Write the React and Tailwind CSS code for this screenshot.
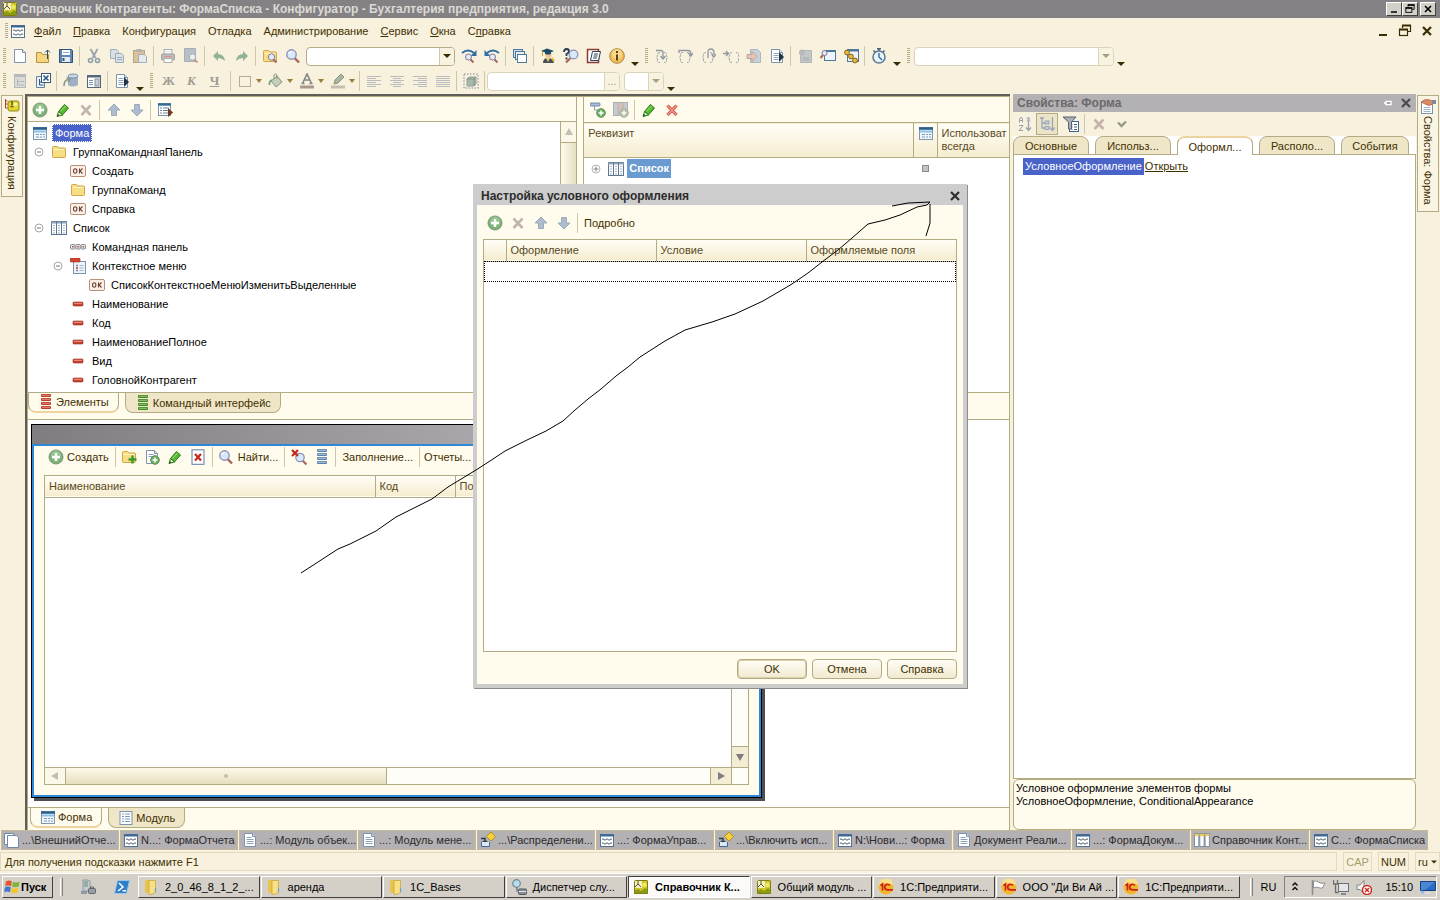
import clsx from 'clsx';

// All icons live on a 16x16 grid
const page = (
  <>
    <path d="M2.500 1.500h8l3 3v10h-11z" fill="#fff" stroke="#7d93ad" />
    <path d="M10.500 1.500v3h3" fill="#dce6f0" stroke="#7d93ad" />
  </>
);
const lens = (
  <>
    <path d="M9.500 10l4.500 4.500" stroke="#a8665a" strokeWidth="2.400" />
    <circle cx="6.500" cy="6.500" r="4.700" fill="#d9e8fb" stroke="#8b93b5" strokeWidth="1.400" />
    <path d="M4 6a3 3 0 012.500-2.500" stroke="#fff" fill="none" />
  </>
);
const smallLens = (
  <>
    <path d="M11.500 11.500l3 3" stroke="#a8665a" strokeWidth="2" />
    <circle cx="9.500" cy="9" r="3.200" fill="#e3edfa" stroke="#84779b" />
  </>
);
const folder = (
  <>
    <path d="M1.500 3.500q0-1 1-1h4l1.500 1.500h5.500q1 0 1 1v7.500q0 1-1 1h-11q-1 0-1-1z" fill="#f7dd84" stroke="#cfa545" />
    <path d="M2.500 5.500h11" stroke="#fdf3c4" />
  </>
);
const greenPlus = (
  <>
    <circle cx="8" cy="8" r="7" fill="#7ab374" stroke="#7f9482" />
    <circle cx="8" cy="6.500" r="5" fill="#a5cf9c" opacity=".6" />
    <path d="M8 4v8M4 8h8" stroke="#fff" strokeWidth="2.400" />
  </>
);
const miniPlus = (
  <>
    <circle cx="11" cy="11" r="4.300" fill="#6fae63" stroke="#5c8f57" />
    <path d="M11 8.500v5M8.500 11h5" stroke="#fff" strokeWidth="1.500" />
  </>
);
const gridForm = (
  <>
    <rect x="1.500" y="2.500" width="13" height="12" fill="#fff" stroke="#56718c" />
    <path d="M1 3.500h14" stroke="#3a6a94" strokeWidth="2" />
    <path d="M3 7.500q1-1.500 2 0t2 0 2 0 2 0 2 0M3 11.500q1-1.500 2 0t2 0 2 0 2 0 2 0" stroke="#4a5866" fill="none" />
  </>
);
const conf = (
  <>
    <rect x="1" y="1" width="14" height="14" rx="1" fill="#d3c62a" />
    <rect x="1" y="1" width="8" height="8" fill="#f3efc8" />
    <path d="M5 1v4l-3 3M5 5l3 3" stroke="#5c5a20" fill="none" />
    <circle cx="11.500" cy="6" r="2.300" fill="#efe95c" />
    <path d="M1 15v-3l4-2 3 2 4-3 3 2v4z" fill="#8a9d12" />
    <rect x="1.500" y="1.500" width="13" height="13" rx="1" fill="none" stroke="#827a17" />
  </>
);
const pageRun = (
  <>
    {page}
    <path d="M4.500 5.500h5M4.500 7.500h5M4.500 9.500h5M4.500 11.500h5" stroke="#8ea2b8" />
    <path d="M10 4l5 5-5 5z" fill="#1f3347" />
  </>
);
const braces = (
  <path d="M6 4.500q-2.500 0-2.500 2V8L2.500 9.500l1 1.500v2q0 1.500 2.500 1.500M10 4.500q2.500 0 2.500 2V8l1 1.500-1 1.500v2q0 1.500-2.500 1.500" fill="none" stroke="#a3a8ae" strokeDasharray="3 .7" />
);
const stack = (fill, light) => (
  <>
    {[1, 5, 9, 13].map((y) => (
      <g key={y}>
        <rect x="3" y={y - 1} width="10" height="3" rx="1" fill={fill} />
        <path d={`M4 ${y + 0.3}h8`} stroke={light} />
      </g>
    ))}
  </>
);
const lines = (rows) => (
  <>
    {rows.map(([a, b], i) => (
      <path key={i} d={`M${a} ${3.5 + i * 2}H${b}`} stroke="#b9bbbd" />
    ))}
  </>
);

const ICONS = {
  conf,
  page,
  lens,
  folder,
  greenPlus,
  gridForm,
  pageRun,
  open: (
    <>
      <path d="M1.500 4.500h5l1 2h6v8h-12z" fill="#f5d781" stroke="#b9903c" />
      <path d="M12.500 11V2M10 4.500L12.500 2 15 4.500" fill="none" stroke="#2f4d69" />
    </>
  ),
  save: (
    <>
      <path d="M1.500 1.500h12l1 1v12h-13z" fill="#5c88b3" stroke="#2f5377" />
      <rect x="4" y="2" width="8" height="5" fill="#fff" />
      <rect x="4" y="9" width="8" height="5" fill="#e6edf5" />
      <path d="M5.500 10v3" stroke="#2f5377" strokeWidth="2" />
      <path d="M5 4.500h6" stroke="#9ab" />
    </>
  ),
  cut: (
    <>
      <path d="M4.500 1l5 9M11.500 1l-5 9" stroke="#5a7089" strokeWidth="1.800" />
      <circle cx="4.500" cy="12.500" r="2" fill="none" stroke="#4a6788" strokeWidth="1.600" />
      <circle cx="11.500" cy="12.500" r="2" fill="none" stroke="#4a6788" strokeWidth="1.600" />
    </>
  ),
  copy: (
    <>
      <path d="M1.500 1.500h6l2 2v7h-8z" fill="#c6d6ea" stroke="#6482a5" />
      <path d="M6.500 5.500h6l2 2v7h-8z" fill="#c6d6ea" stroke="#6482a5" />
      <path d="M8 9.500h5M8 11.500h5" stroke="#6482a5" />
    </>
  ),
  paste: (
    <>
      <rect x="1.500" y="2.500" width="11" height="12" fill="#c9a46e" stroke="#8a7350" />
      <rect x="4.500" y="1" width="5" height="3" fill="#7d8998" />
      <path d="M6.500 6.500h6l2 2v6h-8z" fill="#dbe6f3" stroke="#6482a5" />
    </>
  ),
  print: (
    <>
      <rect x="4" y="1.500" width="8" height="5" fill="#eef2f8" stroke="#75859b" />
      <rect x="1.500" y="6" width="13" height="6" rx="1" fill="#9b9aa6" stroke="#67707f" />
      <rect x="4" y="10.500" width="8" height="4" fill="#fff" stroke="#75859b" />
      <path d="M4 8.500h8" stroke="#c3564a" />
    </>
  ),
  preview: (
    <>
      <path d="M1.500 .500h11v13h-11z" fill="#8fa0b8" stroke="#71849e" />
      {smallLens}
    </>
  ),
  undo: <path d="M7 3v3q6 0 7 7-3-3-7-3v3L2 8z" fill="#53876a" />,
  redo: <path d="M9 3v3q-6 0-7 7 3-3 7-3v3l5-5z" fill="#53876a" />,
  findFolder: (
    <>
      {folder}
      {smallLens}
    </>
  ),
  findNext: (
    <>
      <path d="M1 5q6-5 12 0" fill="none" stroke="#2f6ea3" strokeWidth="1.800" />
      <path d="M15.500 2v6h-6z" fill="#2f6ea3" />
      <path d="M9.500 11.500l3 3" stroke="#a8665a" strokeWidth="2" />
      <circle cx="7.500" cy="9" r="3" fill="#e3edfa" stroke="#84779b" />
    </>
  ),
  findPrev: (
    <>
      <path d="M3 5q6-5 12 0" fill="none" stroke="#2f6ea3" strokeWidth="1.800" />
      <path d="M.500 2v6h6z" fill="#2f6ea3" />
      <path d="M10.500 11.500l3 3" stroke="#a8665a" strokeWidth="2" />
      <circle cx="8.500" cy="9" r="3" fill="#e3edfa" stroke="#84779b" />
    </>
  ),
  windows: (
    <>
      <rect x="1.500" y="1.500" width="9" height="8" fill="#cfe0ee" stroke="#4d7898" />
      <rect x="3.500" y="3.500" width="9" height="8" fill="#e4eef6" stroke="#4d7898" />
      <rect x="5.500" y="6.500" width="9" height="8" fill="#fff" stroke="#4d7898" />
    </>
  ),
  student: (
    <>
      <path d="M3 15q0-5 5-5t6 5z" fill="#46515b" />
      <path d="M6 10l2 4 2-4z" fill="#f3d66a" />
      <circle cx="8.500" cy="7" r="3" fill="#f0c38f" />
      <path d="M1 3l6-2.500L14 3 8 5.500z" fill="#1d4b63" />
      <path d="M5 4v2q3 1 6 0V4" fill="#1d4b63" />
      <path d="M2.500 4v4" stroke="#d89c2a" />
      <path d="M12 10l2 3" stroke="#f0b429" strokeWidth="2" />
    </>
  ),
  helpLens: (
    <>
      <path d="M1 4q0-3 2.500-3T6 3.500Q6 5 3.500 6v2M3.500 9.500v2" stroke="#243b52" strokeWidth="1.800" fill="none" />
      <path d="M7.500 10L3 14.500" stroke="#a8665a" strokeWidth="2.200" />
      <circle cx="10.500" cy="6.500" r="4.300" fill="#d9e8fb" stroke="#8b93b5" strokeWidth="1.300" />
    </>
  ),
  book: (
    <>
      <rect x="1.500" y="1.500" width="11" height="13" fill="#fff" stroke="#8c3a33" strokeWidth="1.500" />
      <path d="M6.500 3.500h8l-2 9h-8z" fill="#fff" stroke="#2c3e57" />
      <path d="M8 6h4M7.500 8h4M7 10h4" stroke="#2c3e57" />
    </>
  ),
  info: (
    <>
      <circle cx="8" cy="8" r="7.300" fill="#f3c25c" stroke="#a98339" />
      <circle cx="8" cy="6" r="5" fill="#f9e0a0" opacity=".7" />
      <path d="M8 3v2M8 6.500v6" stroke="#5a420e" strokeWidth="2" />
    </>
  ),
  stepInto: (
    <>
      {braces}
      <path d="M2 2.500h5q2 0 2 2v5M6.500 8L9 11l2.500-3" fill="none" stroke="#8f97a1" strokeWidth="1.300" />
    </>
  ),
  stepOver: (
    <>
      {braces}
      <path d="M2 5V2.500h9q3 0 3 4M11.500 5L14 8l2-3" fill="none" stroke="#8f97a1" strokeWidth="1.300" />
    </>
  ),
  stepOut: (
    <>
      {braces}
      <path d="M8 10V4q0-3 3-3t3 4v2M11.500 6L14 9l2-3" fill="none" stroke="#8f97a1" strokeWidth="1.300" />
    </>
  ),
  runTo: (
    <>
      <g transform="translate(3 0)">{braces}</g>
      <path d="M0 5.500h5M3 3l2.500 2.500L3 8" fill="none" stroke="#8f97a1" strokeWidth="1.300" />
    </>
  ),
  goPage: (
    <>
      <path d="M4.500 1.500h7l3 3v10h-10z" fill="#a9bdd6" stroke="#7890ad" />
      <path d="M1 6.500h5V3.500l5 5-5 5v-3H1z" fill="#d9a6a0" stroke="#9c6f6c" />
    </>
  ),
  evalPage: (
    <>
      <path d="M3.500 2.500h11v12h-11z" fill="#a3adbb" stroke="#8490a0" />
      <circle cx="5" cy="4.500" r="3" fill="#8d97a6" />
      <path d="M5.500 10h7M5.500 12h7" stroke="#77808c" />
    </>
  ),
  watch: (
    <>
      <rect x="4.500" y="2.500" width="11" height="10" fill="#eef4fa" stroke="#4d7898" />
      <path d="M4 3h12" stroke="#4d7898" strokeWidth="2" />
      <circle cx="4.500" cy="5" r="2.500" fill="#e3edfa" stroke="#84779b" />
      <path d="M3 7l-2.500 3" stroke="#a8665a" strokeWidth="2" />
    </>
  ),
  chain: (
    <>
      <rect x="4.500" y="1.500" width="11" height="12" fill="#eef4fa" stroke="#4d7898" />
      <path d="M4 2.500h12" stroke="#4d7898" strokeWidth="2" />
      <circle cx="4" cy="4.500" r="2.400" fill="#f0b93a" stroke="#80631b" />
      <circle cx="8" cy="8.500" r="2.400" fill="#f0b93a" stroke="#80631b" />
      <circle cx="12" cy="12.500" r="2.400" fill="#f0b93a" stroke="#80631b" />
    </>
  ),
  timer: (
    <>
      <path d="M8 0v3M6 .800h4M2.500 2.500l2 2M13.500 2.500l-2 2" stroke="#4a5f75" strokeWidth="1.500" />
      <circle cx="8" cy="9" r="6" fill="#eaf3fb" stroke="#5d7893" strokeWidth="1.500" />
      <path d="M8 5v4l3 3" fill="none" stroke="#2e6da0" strokeWidth="1.400" />
    </>
  ),
  treeGray: (
    <>
      <rect x="2.500" y="1.500" width="11" height="13" fill="#c9ced6" stroke="#8b95a3" />
      <path d="M2.500 3h11" stroke="#8b95a3" strokeWidth="2" />
      <path d="M5.500 6v6h3M5.500 8.500h3M9 8.500h3M9 12h3" stroke="#7e8896" fill="none" />
    </>
  ),
  treeX: (
    <>
      <path d="M1.500 3.500h8v11h-8z" fill="#eaf1f8" stroke="#6482a5" />
      <path d="M4.500 6v6h4M4.500 9h4" stroke="#38597a" fill="none" />
      <rect x="6.500" y=".500" width="9" height="9" fill="#fff" stroke="#38597a" />
      <path d="M8.500 2.500l5 5M13.500 2.500l-5 5" stroke="#2b5b8a" strokeWidth="1.700" />
    </>
  ),
  db: (
    <>
      <path d="M5 3v9q4.500 3 10 0V3z" fill="#9db0c4" />
      <ellipse cx="10" cy="3" rx="5" ry="2" fill="#c9d6e3" stroke="#8095ab" />
      <path d="M1 13q0-6 5-7M3.500 4.500L7 6 5 9" fill="none" stroke="#8a988f" strokeWidth="1.600" />
    </>
  ),
  pane: (
    <>
      <rect x="1.500" y="2.500" width="13" height="12" fill="#fff" stroke="#54687d" />
      <path d="M1 3.500h14" stroke="#54687d" strokeWidth="2" />
      <path d="M3 7.500h4M3 9.500h4M3 11.500h4" stroke="#7d93ad" />
      <rect x="9" y="6" width="4" height="7" fill="#c9ced6" stroke="#8b8f96" />
    </>
  ),
  box: <rect x="2.500" y="3.500" width="11" height="10" fill="none" stroke="#b4ad90" />,
  bucket: (
    <>
      <path d="M3 8l6-5 5 6-6 5z" fill="#c3cfba" stroke="#87937d" />
      <path d="M6 6V2q2-2 3 0v4" fill="none" stroke="#87937d" />
      <path d="M4 7q-3 1-2.500 5" stroke="#7aa383" strokeWidth="1.800" fill="none" />
    </>
  ),
  fontColor: (
    <>
      <path d="M3.500 10.500L8 1l4.500 9.500M5 7h6M2.500 10.500h3M10.500 10.500h3" stroke="#85868a" strokeWidth="1.600" fill="none" />
      <rect x="1" y="12.500" width="14" height="3" fill="#a79a8b" />
    </>
  ),
  penColor: (
    <>
      <path d="M4 11l1-4 6-6 3 3-6 6z" fill="#a9b79f" stroke="#87937d" />
      <rect x="1" y="12.500" width="14" height="3" fill="#c5bfae" />
    </>
  ),
  alignL: lines([[1, 15], [1, 10], [1, 15], [1, 10], [1, 15], [1, 10]]),
  alignC: lines([[1, 15], [4, 12], [1, 15], [4, 12], [1, 15], [4, 12]]),
  alignR: lines([[1, 15], [6, 15], [1, 15], [6, 15], [1, 15], [6, 15]]),
  alignJ: lines([[1, 15], [1, 15], [1, 15], [1, 15], [1, 15], [1, 15]]),
  cube: (
    <>
      <rect x="1" y="1" width="14" height="14" fill="none" stroke="#a9abad" strokeWidth="1.500" strokeDasharray="1.500 1.500" />
      <path d="M4 6l2-2h7v7l-2 2H4z" fill="#a9b9ab" stroke="#93a196" />
      <path d="M4 6h7v7M11 6l2-2" fill="none" stroke="#82928a" />
    </>
  ),
  pencil: (
    <>
      <path d="M3.500 9.500l6-7 4 3.500-6 7z" fill="#57b832" stroke="#2b7a1b" />
      <path d="M2 14.500l1.500-5 4 3.500z" fill="#dff0c8" stroke="#2b7a1b" />
      <path d="M2 14.500l1-2.500 1.500 1.500z" fill="#234b16" />
      <path d="M5.500 9.500l5-5.500" stroke="#a4e07c" />
    </>
  ),
  crossGray: <path d="M3.500 3.500l9 9.500M12.500 3.500l-9 9.500" stroke="#c4b4ae" strokeWidth="2.600" />,
  crossRed: (
    <>
      <path d="M3.500 3.500l9 9.500M12.500 3.500l-9 9.500" stroke="#cf5144" strokeWidth="3.200" />
      <path d="M3.500 3.500l9 9.500M12.500 3.500l-9 9.500" stroke="#f09a8a" strokeWidth="1.200" />
    </>
  ),
  up: <path d="M8 2l6 6h-3.500v5.500h-5V8H2z" fill="#afbccd" stroke="#9baabd" />,
  down: <path d="M8 14l6-6h-3.500V2.500h-5V8H2z" fill="#afbccd" stroke="#9baabd" />,
  formRun: (
    <>
      <rect x="1.500" y="1.500" width="12" height="12" fill="#fff" stroke="#7d93ad" />
      <path d="M1 2.500h13" stroke="#2f6c97" strokeWidth="2.400" />
      <path d="M3 6h2M6 6h6M3 8.500h2M6 8.500h6M3 11h2M6 11h6" stroke="#6a819a" />
      <path d="M11 6l5 4.500-5 4.500z" fill="#6f3822" />
    </>
  ),
  form: (
    <>
      <rect x="1.500" y="2.500" width="13" height="12" fill="#eef5fc" stroke="#8396ab" />
      <path d="M1 3.500h14" stroke="#2d618c" strokeWidth="2.600" />
      <path d="M2 6.500h12" stroke="#8cc0e6" strokeWidth="2" />
      <path d="M4 9.500h3M8 9.500h2M11 9.500h2M4 12h3M8 12h2M11 12h2" stroke="#7d9dbb" />
    </>
  ),
  ok: (
    <>
      <rect x=".500" y="2.500" width="15" height="11" rx="1.500" fill="#fcf0e6" stroke="#b98d78" />
      <ellipse cx="5.200" cy="8" rx="1.700" ry="2.200" fill="none" stroke="#6b4034" strokeWidth="1.100" />
      <path d="M9.500 5.500v5M12.500 5.500L10 8l2.500 2.500" fill="none" stroke="#6b4034" strokeWidth="1.100" />
    </>
  ),
  table: (
    <>
      <rect x=".500" y="1.500" width="15" height="13" fill="#fff" stroke="#5c7590" />
      <path d="M0 2.500h16" stroke="#8fa3b8" strokeWidth="2" />
      <path d="M5.500 1v14M10.500 1v14" stroke="#5c7590" />
      <path d="M2 5.500h2M2 8h2M2 10.500h2M7 5.500h2M7 8h2M7 10.500h2M12 5.500h2M12 8h2M12 10.500h2M2 13h2M7 13h2M12 13h2" stroke="#9fb1c4" />
    </>
  ),
  cmdbar: (
    <>
      {[0, 5.3, 10.6].map((x) => (
        <g key={x}>
          <rect x={x + 0.5} y="5.500" width="4.400" height="4.500" rx=".8" fill="#e9eaec" stroke="#85888c" />
          <rect x={x + 2} y="7" width="1.500" height="1.500" fill="#a0564a" />
        </g>
      ))}
    </>
  ),
  ctxmenu: (
    <>
      <rect x="3.500" y="3.500" width="12" height="12" fill="#eef3f9" stroke="#7c92aa" />
      <rect x="0" y="0" width="10" height="4" rx="1" fill="#d6432f" stroke="#98301f" strokeWidth=".6" />
      <path d="M6 7.500h2M6 12.500h2" stroke="#7b8fa5" strokeWidth="1.500" />
      <path d="M6 10h2" stroke="#c33" strokeWidth="1.500" />
      <path d="M9.500 7.500h4M9.500 10h4M9.500 12.500h4" stroke="#a5b6c8" />
    </>
  ),
  dash: (
    <>
      <rect x="3" y="6" width="10" height="4" rx="1" fill="#c9422f" stroke="#8f2b1d" strokeWidth=".6" />
      <path d="M4 7.300h8" stroke="#ee9886" />
    </>
  ),
  stackRed: stack('#b5402e', '#ef8672'),
  stackGreen: stack('#42882a', '#94cf6c'),
  stackBlue: stack('#5f82ad', '#b3c8df'),
  module: (
    <>
      <rect x="2" y="1.500" width="12" height="13" fill="#fbfdff" stroke="#7d93ad" />
      <path d="M4 4h2M7 4h5M4 6.500h2M7 6.500h5M4 9h2M7 9h5M4 11.500h2M7 11.500h5" stroke="#7f9ab7" />
    </>
  ),
  text: (
    <>
      {page}
      <path d="M4.500 5.500h5M4.500 7.500h7M4.500 9.500h7M4.500 11.500h7" stroke="#8ea2b8" />
    </>
  ),
  pages: (
    <>
      <path d="M.500 1.500h9v11h-9z" fill="#fff" stroke="#6f8aa8" />
      <path d="M3.500 3.500h9l2 2v10h-11z" fill="#fff" stroke="#6f8aa8" />
    </>
  ),
  attrAdd: (
    <>
      <rect x="0" y="1" width="10" height="3" rx="1" fill="#a9bfd9" stroke="#5a7699" strokeWidth=".8" />
      <path d="M4.500 4v4h4" fill="none" stroke="#8ba0b6" />
      {miniPlus}
    </>
  ),
  colAdd: (
    <>
      <rect x=".500" y=".500" width="14" height="13" fill="#a4acb8" stroke="#7a8390" />
      <path d="M5 1v12M10 1v12" stroke="#7a8390" />
      <path d="M6 1h3v12H6z" fill="#cf8f8a" />
      <circle cx="11" cy="11" r="4.300" fill="#7f9a7c" stroke="#75866f" />
      <path d="M11 8.500v5M8.500 11h5" stroke="#fff" strokeWidth="1.500" />
    </>
  ),
  folderPlus: (
    <>
      {folder}
      <path d="M11.500 6.500v8M7.500 10.500h8" stroke="#3c9a2b" strokeWidth="2.400" />
    </>
  ),
  docPlus: (
    <>
      {page}
      <path d="M4.500 5.500h5M4.500 7.500h5" stroke="#8ea2b8" />
      {miniPlus}
    </>
  ),
  docX: (
    <>
      <rect x="2" y=".800" width="12" height="14.500" fill="#fff" stroke="#5b7ea6" />
      <path d="M5 5l6 6.500M11 5l-6 6.500" stroke="#c4281c" strokeWidth="2.200" />
    </>
  ),
  lensX: (
    <>
      <path d="M11.500 11.500l4 4" stroke="#a8665a" strokeWidth="2.200" />
      <circle cx="9" cy="8.500" r="4.200" fill="#d9e8fb" stroke="#8b93b5" strokeWidth="1.300" />
      <path d="M1 1l6 6M7 1L1 7" stroke="#c4281c" strokeWidth="2.200" />
    </>
  ),
  sortAz: (
    <>
      <path d="M2.500 6.500V3l1.500-2 1.500 2v3.500M2.500 4.500h3M2 9.500h4l-4 5h4" fill="none" stroke="#9aa0a8" />
      <path d="M11.500 1v13M9 11.500l2.500 3 2.500-3" fill="none" stroke="#9aa5b3" strokeWidth="1.400" />
      <path d="M9.500 2l4 3M13.500 2l-4 3" stroke="#b3bac3" />
    </>
  ),
  sortTree: (
    <>
      <path d="M1 2h4M3 2v10h4M3 7h4" fill="none" stroke="#9aa5b3" strokeWidth="1.300" />
      <rect x="6" y="5" width="4" height="3" fill="#c4ccd6" stroke="#9aa5b3" />
      <rect x="6" y="10.500" width="4" height="3" fill="#c4ccd6" stroke="#9aa5b3" />
      <path d="M13.500 1v13M11 11.500l2.500 3 2.500-3" fill="none" stroke="#9aa5b3" strokeWidth="1.300" />
    </>
  ),
  funnel: (
    <>
      <rect x="6.500" y="5.500" width="9" height="10" fill="#fff" stroke="#3e618a" />
      <path d="M11 8.500h3M11 11h3M11 13.500h3M8.500 8.500h1M8.500 13.500h1" stroke="#3e618a" />
      <path d="M8.500 11h1" stroke="#c33" />
      <path d="M0 1h13L8.500 6v7h-3V6z" fill="#a9b0ba" stroke="#5b636e" />
    </>
  ),
  check: <path d="M4 6.500l3.500 3.500L12 5.500" fill="none" stroke="#8f9c86" strokeWidth="2.400" />,
  key: (
    <>
      <path d="M11 0l4.500 4.500L11 9 6.500 4.500z" fill="#f6d13c" stroke="#b88d1a" />
      <path d="M1 6.500h4v4M3 9l2 2.500L7 9" fill="none" stroke="#2b3c50" strokeWidth="1.500" />
      <path d="M1.500 10v4.500h8V10" fill="#dfe8f1" stroke="#3f6a95" />
    </>
  ),
  catalog: (
    <>
      {[0, 5.3, 10.6].map((x) => (
        <g key={x}>
          <rect x={x + 0.5} y="1.500" width="4.300" height="13" fill="#fff" stroke="#7f90a3" />
          <path d={`M${x + 0.5} 3h4.3`} stroke="#e7cf5f" strokeWidth="2.400" />
        </g>
      ))}
    </>
  ),
  hand: (
    <>
      <rect x="1.500" y="4.500" width="11" height="11" fill="#fff" stroke="#7d93ad" />
      <path d="M3.500 9.500h7M3.500 11.500h7M3.500 13.500h7" stroke="#9db4cc" />
      <path d="M1 4q4-4 9-2l3 1v3q-4 3-8 0z" fill="#d98a63" stroke="#9c5b3c" strokeWidth=".6" />
      <rect x="12" y="2" width="4" height="4" fill="#7b8b9c" />
    </>
  ),
  confTree: (
    <>
      <path d="M1.500 1v9h2M1.500 3h2M1.500 6h2" fill="none" stroke="#c0392b" />
      <rect x="4" y="3" width="11" height="10" rx="2" fill="#e2d52f" stroke="#8f861c" />
      <path d="M8 3v4M6.500 8.500h3" stroke="#5c5a20" strokeWidth="1.500" />
      <circle cx="11.500" cy="6.500" r="2" fill="#f8f394" />
    </>
  ),
  server: (
    <>
      <path d="M3 1h5l2 1v10H3z" fill="#c4ccd4" stroke="#7f8a95" strokeWidth=".8" />
      <path d="M4 3h4M4 5h4M4 7h4" stroke="#6b8a6e" />
      <rect x="1" y="12" width="6" height="3" fill="#8f9aa6" />
      <rect x="8.500" y="9.500" width="7" height="5" rx="1" fill="#9a9ea3" stroke="#5e656c" />
      <path d="M10.500 9.500V8h3v1.500" fill="none" stroke="#5e656c" />
    </>
  ),
  shell: (
    <>
      <path d="M3.500 1.500h12l-3 13h-12z" fill="#2f7fc6" stroke="#9cc5e8" />
      <path d="M5 4l4 4-5 4M8.500 11.800h3.500" fill="none" stroke="#fff" strokeWidth="1.500" />
    </>
  ),
  winFlag: (
    <>
      <path d="M2 2.500Q5 .500 7.800 2.500L7 7.300Q4 5.500 1.200 7.300z" fill="#e4572e" />
      <path d="M8.800 2.800Q12 4.500 15.500 2.500l-.8 5Q11 9 8 7.500z" fill="#7fb53a" />
      <path d="M1 8.300Q4 6.500 6.800 8.300L6 13.300Q3 11.500.2 13.300z" fill="#3f78cc" />
      <path d="M7.800 8.600Q11 10.200 14.500 8.500l-.8 5Q10 15 7 13.500z" fill="#f4c430" />
    </>
  ),
  folderWin: (
    <>
      <path d="M2 1.500l6-1v14l-6-1z" fill="#e8c34d" />
      <path d="M6 1.500h6.500v12L8 15.500H6z" fill="#f7e184" stroke="#c79f35" strokeWidth=".7" />
      <path d="M12.500 9v4" stroke="#6f9ec9" strokeWidth="1.200" />
    </>
  ),
  manager: (
    <>
      <circle cx="5.500" cy="4.500" r="3.800" fill="#b9dcea" stroke="#6f8795" strokeWidth="1.200" />
      <path d="M6 8v4h4" fill="none" stroke="#6f8795" strokeWidth="1.600" />
      <rect x="7.500" y="10" width="8" height="5.500" rx="1" fill="#8b9197" stroke="#4e565e" />
      <path d="M7.500 12.500h8" stroke="#ddd" />
    </>
  ),
  oneC: (
    <>
      <circle cx="8" cy="8" r="7.500" fill="#f3b72d" />
      <path d="M1 6a7 7 0 0114 0q-7-3-14 0z" fill="#fbe08a" />
      <path d="M2.500 6.500L4.500 5v6.500M12 6.500q-1-1.500-3-1.200-2.500.500-2.300 3 .300 2.500 3 2.500H15" fill="none" stroke="#d0201a" strokeWidth="1.700" />
    </>
  ),
  chevrons: <path d="M5.500 6.500L8 4l2.500 2.500M5.500 11L8 8.500l2.500 2.500" fill="none" stroke="#111" strokeWidth="1.500" />,
  flag: (
    <>
      <path d="M2.500 1v15" stroke="#8b8d90" strokeWidth="1.600" />
      <path d="M3.500 2.500q3-1.500 5 .5t6.500 1l-2.500 5q-2.500.500-4-.500t-5 .5z" fill="#fff" stroke="#8b8d90" />
    </>
  ),
  monitor: (
    <>
      <rect x="5.500" y="4.500" width="10" height="8" fill="#e3e5e7" stroke="#6b6f73" />
      <path d="M8 15h5" stroke="#6b6f73" strokeWidth="1.500" />
      <path d="M.500 1v4h4V1M2.500 5v8.500h3" fill="none" stroke="#6b6f73" strokeWidth="1.300" />
    </>
  ),
  mute: (
    <>
      <path d="M1 6h3l4-4.500v13L4 10.500H1z" fill="#f2f2f2" stroke="#85878a" />
      <circle cx="11" cy="11" r="4.500" fill="#fff" stroke="#cb2a22" strokeWidth="1.500" />
      <path d="M9 9l4 4M13 9l-4 4" stroke="#cb2a22" strokeWidth="1.500" />
    </>
  ),
  desktop: (
    <>
      <path d="M.500 2.500h15v9h-15z" fill="#2a6bc4" stroke="#17407c" />
      <path d="M1 3h14L5 11H1z" fill="#5f9be2" opacity=".6" />
      <path d="M5 14h6" stroke="#d9dde2" strokeWidth="2" />
      <circle cx="2.500" cy="13" r="1.500" fill="#7db8ef" />
    </>
  ),
  minus: (
    <>
      <circle cx="8" cy="8" r="4" fill="#fff" stroke="#a5a5a5" />
      <path d="M6 8h4" stroke="#777" />
    </>
  ),
  plus: (
    <>
      <circle cx="8" cy="8" r="4" fill="#fff" stroke="#b5b5b5" />
      <path d="M5.500 8h5M8 5.500v5" stroke="#777" strokeWidth=".9" />
    </>
  ),
  close: <path d="M4 4l8 8M12 4l-8 8" stroke="currentColor" strokeWidth="2.200" />,
  minimize: <path d="M4 12h8" stroke="currentColor" strokeWidth="2" />,
  restore: (
    <>
      <path d="M5.500 5V2.500h8v6H11" fill="none" stroke="currentColor" strokeWidth="1.200" />
      <path d="M5 2.500h9M2 6.500h9" stroke="currentColor" strokeWidth="2" />
      <rect x="2.500" y="6.500" width="8" height="6" fill="none" stroke="currentColor" strokeWidth="1.200" />
    </>
  ),
  pin: <path d="M4 8h2M6 6.500h5v3H6z" stroke="#fff" strokeWidth="1.400" fill="#888" />,
  triDown: <path d="M4 6h8l-4 4z" fill="currentColor" />,
  triUp: <path d="M4 11h8L8 4z" fill="currentColor" />,
  triLeft: <path d="M11 4v8L4 8z" fill="currentColor" />,
  triRight: <path d="M5 4v8l7-4z" fill="currentColor" />,
};

function Icon({ name, className }) {
  return (
    <svg viewBox="0 0 16 16" width="16" height="16" className={clsx('shrink-0', className)} aria-hidden="true">
      {ICONS[name]}
    </svg>
  );
}

const Tool = ({ icon, off }) => (
  <button aria-label={icon} className={clsx('flex h-5 w-[23px] shrink-0 items-center justify-center', off && 'opacity-60')}>
    <Icon name={icon} />
  </button>
);

const Sep = () => (
  <div className="flex h-5 w-[5px] shrink-0 justify-center">
    <div className="w-px bg-[#cfc8a8]" />
  </div>
);

const Grip = () => (
  <div className="flex h-4 w-2 shrink-0 justify-center">
    <div className="w-[3px] bg-[repeating-linear-gradient(#b5ad84_0_1px,transparent_1px_2px)]" />
  </div>
);

// small "more buttons" arrow at the end of each toolbar
const More = () => (
  <button aria-label="more" className="flex h-5 w-[14px] shrink-0 items-end justify-center text-[#3a2c00]">
    <svg viewBox="0 0 8 4" width="8" height="4"><path d="M0 0h8L4 4z" fill="currentColor" /></svg>
  </button>
);

const ColorDrop = ({ icon }) => (
  <div className="flex w-[31px] shrink-0 items-center">
    <Tool icon={icon} />
    <svg viewBox="0 0 6 4" width="6" height="4"><path d="M0 0h6L3 4z" fill="#9a7d3a" /></svg>
  </div>
);

// 's' separator, 'g' grip, 'm' overflow arrow, leading '-' means disabled
const Tools = ({ list }) =>
  list.map((t, i) => {
    if (t === 's') return <Sep key={i} />;
    if (t === 'g') return <Grip key={i} />;
    if (t === 'm') return <More key={i} />;
    return t[0] === '-' ? <Tool key={i} icon={t.slice(1)} off /> : <Tool key={i} icon={t} />;
  });

const Combo = ({ label, className, off, dots }) => (
  <div className={clsx('flex h-[19px] shrink-0 overflow-hidden rounded border bg-white', off ? 'border-[#dad4bb]' : 'border-[#b3ab84]', className)}>
    <input aria-label={label} className="min-w-0 flex-1 bg-transparent px-1 outline-none" />
    <button
      aria-label={`${label} list`}
      className={clsx('flex w-[15px] items-center justify-center border-l bg-[#f8f3df]', off ? 'border-[#dad4bb] text-[#a59e86]' : 'border-[#cfc8a8] text-[#3a2c00]')}
    >
      {dots ? <span>...</span> : <Icon name="triDown" />}
    </button>
  </div>
);

const MENU = ['Файл', 'Правка', 'Конфигурация', 'Отладка', 'Администрирование', 'Сервис', 'Окна', 'Справка'];
const HOT = { Файл: 0, Правка: 0, Конфигурация: -1, Отладка: -1, Администрирование: -1, Сервис: 0, Окна: 0, Справка: 1 };

const TREE = [
  { level: 1, icon: 'folder', text: 'ГруппаКоманднаяПанель', open: true },
  { level: 2, icon: 'ok', text: 'Создать' },
  { level: 2, icon: 'folder', text: 'ГруппаКоманд' },
  { level: 2, icon: 'ok', text: 'Справка' },
  { level: 1, icon: 'table', text: 'Список', open: true },
  { level: 2, icon: 'cmdbar', text: 'Командная панель' },
  { level: 2, icon: 'ctxmenu', text: 'Контекстное меню', open: true },
  { level: 3, icon: 'ok', text: 'СписокКонтекстноеМенюИзменитьВыделенные' },
  { level: 2, icon: 'dash', text: 'Наименование' },
  { level: 2, icon: 'dash', text: 'Код' },
  { level: 2, icon: 'dash', text: 'НаименованиеПолное' },
  { level: 2, icon: 'dash', text: 'Вид' },
  { level: 2, icon: 'dash', text: 'ГоловнойКонтрагент' },
];
const INDENT = { 1: 'pl-0.5', 2: 'pl-[21px]', 3: 'pl-10' };

const WINDOWS = [
  ['pages', '...\\ВнешнийОтче...'],
  ['gridForm', 'N...: ФормаОтчета'],
  ['text', '...: Модуль объек...'],
  ['text', '...: Модуль мене...'],
  ['key', '...\\Распределени...'],
  ['gridForm', '...: ФормаУправ...'],
  ['key', '...\\Включить исп...'],
  ['gridForm', 'N:\\Нови...: Форма'],
  ['text', 'Документ Реали...'],
  ['gridForm', '...: ФормаДокум...'],
  ['catalog', 'Справочник Конт...'],
  ['gridForm', 'С...: ФормаСписка'],
];

const TASKS = [
  ['folderWin', '2_0_46_8_1_2_...'],
  ['folderWin', 'аренда'],
  ['folderWin', '1C_Bases'],
  ['manager', 'Диспетчер слу...'],
  ['conf', 'Справочник К...', true],
  ['conf', 'Общий модуль ...'],
  ['oneC', '1С:Предприяти...'],
  ['oneC', 'ООО "Ди Ви Ай ...'],
  ['oneC', '1С:Предприяти...'],
];

function TitleBar() {
  const btn = 'flex h-[14px] w-4 items-center justify-center border border-t-white border-l-white border-r-[#404040] border-b-[#404040] bg-[#d4d0c8] text-black';
  return (
    <header className="flex h-[18px] items-center bg-[#848184] pl-0.5 pr-1">
      <Icon name="conf" />
      <h1 className="ml-0.5 flex-1 text-[12px] font-bold text-[#dcd9d4]">
        Справочник Контрагенты: ФормаСписка - Конфигуратор - Бухгалтерия предприятия, редакция 3.0
      </h1>
      <button aria-label="minimize" className={btn}><Icon name="minimize" className="size-3" /></button>
      <button aria-label="restore" className={btn}><Icon name="restore" className="size-3" /></button>
      <button aria-label="close" className={clsx(btn, 'ml-0.5')}><Icon name="close" className="size-3" /></button>
    </header>
  );
}

function MenuBar() {
  return (
    <nav className="flex h-[26px] items-center pl-0.5">
      <Grip />
      <Icon name="gridForm" className="mr-2" />
      <div className="flex flex-1 gap-3">
        {MENU.map((m) => {
          const i = HOT[m];
          return (
            <button key={m} className="text-[#3f3000]">
              {i < 0 ? m : <>{m.slice(0, i)}<span className="underline">{m[i]}</span>{m.slice(i + 1)}</>}
            </button>
          );
        })}
      </div>
      <div className="flex gap-[6px] pr-[5px] text-[#3a2c00]">
        <button aria-label="minimize child"><Icon name="minimize" /></button>
        <button aria-label="restore child"><Icon name="restore" /></button>
        <button aria-label="close child"><Icon name="close" /></button>
      </div>
    </nav>
  );
}

function Toolbars() {
  const letter = 'h-5 w-[23px] shrink-0 font-["Liberation_Serif",serif] text-[13px] font-bold text-[#a09c94]';
  return (
    <>
      <div className="flex h-6 items-center">
        <Tools list={['g', 'page', 'open', 'save', 's', '-cut', '-copy', '-paste', 's', '-print', '-preview', 's', '-undo', '-redo', 's', 'findFolder', 'lens']} />
        <Combo label="search" className="mx-0.5 w-[149px]" />
        <Tools list={['findNext', 'findPrev', 's', 'windows', 's', 'student', 'helpLens', 'book', 'info', 'm', 'g', 'stepInto', 'stepOver', 'stepOut', 'runTo', '-goPage', 'pageRun', 's', '-evalPage', 'watch', 'chain', 's', 'timer', 'm', 'g']} />
        <Combo label="procedure" off className="ml-0.5 w-[200px]" />
        <More />
      </div>
      <div className="flex h-[26px] items-center">
        <Tools list={['g', '-treeGray', 'treeX', 's', 'db', 'pane', 's', 'pageRun', 'm', 'g']} />
        <div className="flex px-0.5">
          <button className={letter}>Ж</button>
          <button className={clsx(letter, 'italic')}>К</button>
          <button className={clsx(letter, 'underline')}>Ч</button>
        </div>
        <Sep />
        <ColorDrop icon="box" />
        <ColorDrop icon="bucket" />
        <ColorDrop icon="fontColor" />
        <ColorDrop icon="penColor" />
        <Tools list={['s', 'alignL', 'alignC', 'alignR', 'alignJ', 's', 'cube', 's']} />
        <Combo label="font" off dots className="w-[133px]" />
        <Combo label="font size" off className="ml-1 w-10" />
        <More />
      </div>
    </>
  );
}

const BottomTab = ({ icon, children, active }) => (
  <button
    className={clsx(
      'flex h-5 items-center gap-0.5 rounded-b-lg border border-t-0 border-[#b3ab84] px-[9px] text-[#3f3000]',
      active ? 'border-b-2 border-b-[#ecd3a0] bg-[#fffbed]' : 'bg-[#efe6c8]',
    )}
  >
    <Icon name={icon} />
    {children}
  </button>
);

function ElementsPane() {
  return (
    <section className="flex min-w-0 flex-[550] flex-col border-r border-[#b3ab84]">
      <div className="flex h-[25px] items-center border-b border-[#b3ab84] pt-px">
        <Tools list={['greenPlus', 'pencil', 'crossGray', 's', 'up', 'down', 's', 'formRun']} />
      </div>
      <div className="flex bg-white text-black">
        <ul className="flex-1 pb-[3px] pt-px">
          <li className="flex h-[19px] items-center pl-1">
            <Icon name="form" />
            <span className="ml-1 border border-dotted border-white bg-[#4a63c8] px-0.5 leading-4 text-white">Форма</span>
          </li>
          {TREE.map((n) => (
            <li key={n.text} className={clsx('flex h-[19px] items-center', INDENT[n.level])}>
              <span className="w-[21px] pl-px">{n.open && <Icon name="minus" />}</span>
              <Icon name={n.icon} />
              <span className="ml-1.5">{n.text}</span>
            </li>
          ))}
        </ul>
        <div className="flex w-4 flex-col border-l border-[#b3ab84] bg-gradient-to-r from-[#fffbed] to-[#e6dfbf]">
          <div className="flex h-[21px] items-center border-b border-[#b3ab84] bg-[#fbf8ea] text-[#c4bfae]">
            <Icon name="triUp" />
          </div>
        </div>
      </div>
      <div className="flex h-[27px] gap-1.5 border-t border-[#b3ab84]">
        <BottomTab icon="stackRed" active>Элементы</BottomTab>
        <BottomTab icon="stackGreen">Командный интерфейс</BottomTab>
      </div>
    </section>
  );
}

const TH = 'border-r border-[#b3ab84] px-1 text-left font-normal text-[#594a1c]';

function AttributesPane() {
  return (
    <section className="flex min-w-0 flex-[426] flex-col overflow-hidden border-l border-[#b3ab84]">
      <div className="flex h-[25px] shrink-0 items-center pl-0.5 pt-px">
        <Tools list={['attrAdd', '-colAdd', 's', 'pencil', 'crossRed']} />
      </div>
      <div className="flex-1 bg-white">
        <table className="w-full table-fixed border-collapse">
          <thead>
            <tr className="h-[35px] border-y border-[#b3ab84] bg-gradient-to-b from-[#fffdf6] to-[#f6edd0] align-top">
              <th className={clsx(TH, 'py-1 leading-[13px]')}>Реквизит</th>
              <th className={clsx(TH, 'w-6 py-0.5')}><Icon name="form" /></th>
              <th className="w-[72px] overflow-hidden whitespace-nowrap py-1 pl-1 text-left font-normal leading-[13px] text-[#594a1c]">Использоват<br />всегда</th>
            </tr>
          </thead>
          <tbody>
            <tr className="h-[22px]">
              <td>
                <div className="flex items-center pl-1">
                  <Icon name="plus" />
                  <Icon name="table" className="ml-1" />
                  <b className="ml-[3px] bg-[#6a9bd0] px-0.5 leading-[19px] text-white">Список</b>
                </div>
              </td>
              <td><div className="mx-auto size-[7px] border border-[#8a8a8a] bg-[#c4c4c4]" /></td>
              <td />
            </tr>
          </tbody>
        </table>
      </div>
      <div className="h-[27px] shrink-0 border-t border-[#b3ab84]" />
    </section>
  );
}

function FormPreview() {
  const text = 'shrink-0 text-[#3f3000]';
  return (
    <div className="flex w-[731px] flex-1 flex-col border border-black bg-[#fffbed] shadow-[3px_3px_0_0_#4c4e52]">
      <div className="h-[19px] shrink-0 bg-gradient-to-r from-[#7f7d80] to-[#c4c2c6]" />
      <div className="flex flex-1 flex-col border-2 border-[#2f87d8] px-[10px] pb-[10px]">
        <div className="flex h-[21px] items-center overflow-hidden">
          <Tools list={['greenPlus']} />
          <button className={text}>Создать</button>
          <div className="w-1" />
          <Tools list={['s', 'folderPlus', 'docPlus', 'pencil', 'docX', 's', 'lens']} />
          <button className={text}>Найти...</button>
          <div className="w-1" />
          <Tools list={['s', 'lensX', 'stackBlue', 's']} />
          <button className={clsx(text, 'mx-1')}>Заполнение...</button>
          <Sep />
          <button className={clsx(text, 'mx-0.5')}>Отчеты...</button>
        </div>
        <div className="mt-2 flex flex-1 flex-col border border-[#b3ab84] bg-white">
          <div className="flex flex-1">
            <div className="flex-1">
              <table className="w-full table-fixed border-collapse">
                <thead>
                  <tr className="h-[21px] border-b border-[#b3ab84] bg-gradient-to-b from-[#fffdf6] to-[#f6edd0]">
                    <th className={clsx(TH, 'w-[330px]')}>Наименование</th>
                    <th className={clsx(TH, 'w-20')}>Код</th>
                    <th className={TH}>По</th>
                  </tr>
                </thead>
              </table>
            </div>
            <div className="flex w-[17px] flex-col justify-end border-l border-[#b3ab84] bg-[#fffdf8]">
              <div className="flex h-[21px] items-center border-t border-[#b3ab84] bg-[#f3edd4] text-[#7d7d80]">
                <Icon name="triUp" className="rotate-180" />
              </div>
            </div>
          </div>
          <div className="flex h-[17px] border-t border-[#b3ab84] bg-[#fffdf8]">
            <div className="flex w-[21px] justify-center border-r border-[#b3ab84] bg-[#fbf8ea] text-[#c4bfae]"><Icon name="triLeft" /></div>
            <div className="flex w-[321px] items-center justify-center border-r border-[#b3ab84] bg-gradient-to-b from-[#fdf9e8] to-[#e6dfbf]">
              <div className="size-1 rounded-full bg-[#c4bfae]" />
            </div>
            <div className="flex-1" />
            <div className="flex w-[21px] justify-center border-l border-[#b3ab84] bg-[#f3edd4] text-[#7d7d80]"><Icon name="triRight" /></div>
            <div className="w-[17px] border-l border-[#b3ab84]" />
          </div>
        </div>
      </div>
    </div>
  );
}

function Properties() {
  const tabs = ['Основные', 'Использ...', 'Оформл...', 'Располо...', 'События'];
  return (
    <aside className="flex w-[403px] shrink-0 flex-col">
      <div className="flex h-[18px] items-center bg-[#b3b1b3] pl-1 pr-0.5">
        <h2 className="flex-1 text-[12px] font-bold text-[#6b696b]">Свойства: Форма</h2>
        <Icon name="pin" />
        <button aria-label="close properties" className="ml-0.5 text-[#4a484a]"><Icon name="close" /></button>
      </div>
      <div className="flex h-6 items-center">
        <Tools list={['sortAz']} />
        <div className="border border-[#b3ab84] bg-[#ebe4c8]">
          <button aria-label="sortTree" className="flex size-5 items-center justify-center"><Icon name="sortTree" /></button>
        </div>
        <div className="w-px" />
        <Tools list={['funnel', 's', 'crossGray', 'check']} />
      </div>
      <div className="flex h-[18px] gap-1.5 bg-white pr-[7px]">
        {tabs.map((t, i) => (
          <button
            key={t}
            className={clsx(
              'relative h-[19px] rounded-t-lg border border-[#b3ab84] text-[#3f3000]',
              i === 4 ? 'w-[68px]' : 'w-[76px]',
              i === 2 ? 'z-10 border-b-0 border-t-2 border-t-[#ecd3a0] bg-white' : 'bg-[#efe6c8]',
            )}
          >
            {t}
          </button>
        ))}
      </div>
      <div className="flex flex-1 items-start border border-[#b3ab84] bg-white pl-[9px] pt-[3px]">
        <span className="bg-[#4a63c8] px-0.5 leading-[17px] text-white">УсловноеОформление</span>
        <a href="#open" className="ml-px leading-[17px] text-[#3f3000] underline">Открыть</a>
      </div>
      <div className="h-[51px] rounded-md border border-[#b3ab84] bg-[#fffbed] px-0.5 pt-0.5 leading-[13px] text-black">
        <p>Условное оформление элементов формы</p>
        <p>УсловноеОформление, ConditionalAppearance</p>
      </div>
    </aside>
  );
}

const SideTab = ({ icon, children }) => (
  <button className="mt-px flex flex-col items-center gap-0.5 border border-[#b3ab84] bg-[#faf5e2] px-0.5 py-0.5 text-[#3f3000]">
    <Icon name={icon} />
    <span className="pb-1 leading-4 [writing-mode:vertical-rl]">{children}</span>
  </button>
);

function Dialog() {
  const btn = 'h-5 w-[70px] rounded border border-[#b3ab84] bg-gradient-to-b from-[#fffdf6] to-[#f1ead0] text-[#3f3000]';
  return (
    <div role="dialog" aria-label="Настройка условного оформления" className="absolute left-[473px] top-[184px] flex h-[504px] w-[494px] flex-col border-4 border-t-0 border-[#cdcdcd] bg-[#fffbed] shadow-[1px_1px_0_#8d8d8d]">
      <div className="flex h-[21px] shrink-0 items-center bg-[#cdcdcd] pl-1">
        <h2 className="flex-1 pt-0.5 text-[12px] font-bold text-[#2c2c2c]">Настройка условного оформления</h2>
        <button aria-label="close dialog" className="pt-0.5 text-[#2c2c2c]"><Icon name="close" /></button>
      </div>
      <div className="flex flex-1 flex-col px-1.5 pb-[5px]">
        <div className="flex h-[34px] items-center pt-0.5">
          <Tools list={['greenPlus', 'crossGray', 'up', 'down', 's']} />
          <button className="ml-1 text-[#3f3000]">Подробно</button>
        </div>
        <div className="flex-1 border border-[#b3ab84] bg-white">
          <table className="w-full table-fixed border-collapse">
            <thead>
              <tr className="h-[21px] border-b border-[#b3ab84] bg-gradient-to-b from-[#fffdf6] to-[#f6edd0]">
                <th className={clsx(TH, 'w-[22px]')} />
                <th className={TH}>Оформление</th>
                <th className={TH}>Условие</th>
                <th className="px-1 text-left font-normal text-[#594a1c]">Оформляемые поля</th>
              </tr>
            </thead>
            <tbody>
              <tr className="h-[21px] outline-1 -outline-offset-1 outline-dotted outline-black"><td colSpan={4} /></tr>
            </tbody>
          </table>
        </div>
        <div className="mt-[7px] flex justify-end gap-[5px]">
          <button className={clsx(btn, 'ring-1 ring-inset ring-[#d8d0a8]')}>OK</button>
          <button className={btn}>Отмена</button>
          <button className={btn}>Справка</button>
        </div>
      </div>
    </div>
  );
}

function TaskBar() {
  const raised = 'border border-t-white border-l-white border-r-[#404040] border-b-[#404040] bg-[#d4d0c8]';
  const divider = 'h-[18px] w-[3px] border-l border-r border-l-white border-r-[#808080]';
  return (
    <footer className="flex h-[27px] items-center border-t border-white bg-[#d4d0c8] pl-0.5 pr-[3px] text-black">
      <button className={clsx('flex h-[22px] w-[51px] items-center gap-px pl-px font-bold', raised)}>
        <Icon name="winFlag" />Пуск
      </button>
      <div className={clsx(divider, 'ml-[7px]')} />
      <div className="flex w-[75px] justify-end gap-[18px] pr-2">
        <Icon name="server" />
        <Icon name="shell" />
      </div>
      <div className="flex flex-1 gap-px">
        {TASKS.map(([icon, text, on], i) => (
          <button
            key={i}
            className={clsx(
              'flex h-[22px] min-w-0 flex-1 items-center gap-1.5 overflow-hidden whitespace-nowrap pl-1',
              on ? 'border border-b-white border-l-[#404040] border-r-white border-t-[#404040] bg-[#fbfaf8] font-bold' : raised,
            )}
          >
            <Icon name={icon} />
            {text}
          </button>
        ))}
      </div>
      <div className={clsx(divider, 'ml-2.5')} />
      <span className="mx-2">RU</span>
      <div className="flex h-[22px] items-center gap-[7px] border border-b-white border-l-[#808080] border-r-white border-t-[#808080] pl-0.5">
        <Icon name="chevrons" />
        <Icon name="flag" />
        <Icon name="monitor" />
        <Icon name="mute" />
        <time className="ml-1.5">15:10</time>
        <Icon name="desktop" />
      </div>
    </footer>
  );
}

export default function App() {
  return (
    <div className='relative flex min-h-screen flex-col overflow-hidden whitespace-nowrap bg-[#f7f1dd] font-["Liberation_Sans",Arial,sans-serif] text-[11px] leading-[14px]'>
      <TitleBar />
      <MenuBar />
      <Toolbars />

      <main className="flex flex-1">
        <div className="w-[25px] shrink-0 pl-px">
          <SideTab icon="confTree">Конфигурация</SideTab>
        </div>
        <div className="flex min-w-0 flex-1 flex-col border-l-2 border-t-2 border-[#5f5d55]">
          <div className="flex flex-1 flex-col border-l border-r border-t border-[#b3ab84] bg-[#fffbed]">
            <div className="flex gap-1.5 border-b border-[#b3ab84]">
              <ElementsPane />
              <AttributesPane />
            </div>
            <div className="flex flex-1 flex-col bg-white pb-[9px] pl-[3px] pt-1">
              <FormPreview />
            </div>
            <div className="flex h-[23px] gap-1.5 border-t border-[#b3ab84] pl-0.5">
              <BottomTab icon="form" active>Форма</BottomTab>
              <BottomTab icon="module">Модуль</BottomTab>
            </div>
          </div>
        </div>
        <div className="w-[3px] shrink-0" />
        <Properties />
        <div className="w-6 shrink-0 pl-px">
          <SideTab icon="hand">Свойства: Форма</SideTab>
        </div>
      </main>

      <div className="flex gap-px pb-0.5 pl-px pr-3">
        {WINDOWS.map(([icon, text], i) => (
          <button key={i} className="flex h-5 min-w-0 flex-1 items-center gap-0.5 overflow-hidden border border-[#c4bb96] bg-[#b3b1b3] pl-0.5 text-[#2c2a2c]">
            <Icon name={icon} />
            <span>{text}</span>
          </button>
        ))}
      </div>
      <div className="flex h-[21px] gap-1.5 pb-0.5 text-[#3f3000]">
        <span className="flex flex-1 items-center border border-[#e2dbbe] pl-1">Для получения подсказки нажмите F1</span>
        <span className="flex items-center border border-[#e2dbbe] px-0.5 text-[#a89c6c]">CAP</span>
        <span className="flex items-center border border-[#e2dbbe] px-0.5">NUM</span>
        <button className="flex w-[25px] items-center border border-[#e2dbbe] pl-0.5">ru<Icon name="triDown" className="size-3" /></button>
      </div>
      <TaskBar />

      <Dialog />

      {/* freehand pointer drawn over everything */}
      <svg className="pointer-events-none absolute left-[300px] top-[200px]" width="640" height="380" viewBox="300 200 640 380" fill="none" stroke="#000">
        <path d="M301 573L318 562 338 549 350 544 376 531 396 517 414 508 432 499 448 487 476 470 490 461 505 451 527 440 546 431 563 421 575 410 588 399 601 389 616 376 628 367 640 357 665 341 685 330 712 322 735 314 763 301 792 284 808 273 822 262 838 250 852 238 868 224 885 220 900 215 917 207 927 205 930 202" />
        <path d="M892 206L908 203 930 202M930 204V223L926 236" />
      </svg>
    </div>
  );
}
